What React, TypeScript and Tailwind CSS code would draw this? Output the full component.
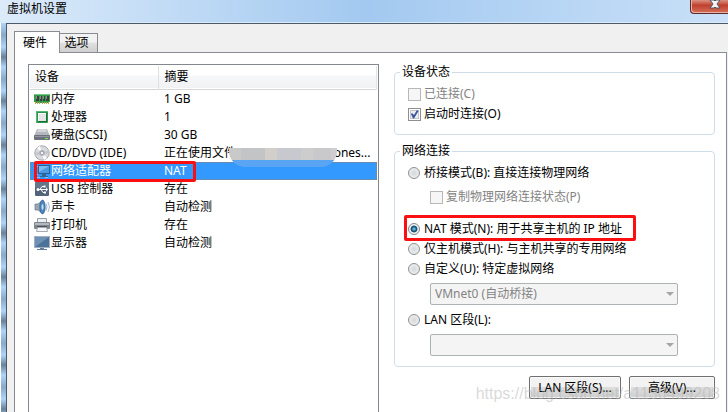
import { ReactNode } from "react";

const MemoryIcon = () => (
  <svg width="16" height="16" viewBox="0 0 16 16">
    <path d="M0 3h16v8h-1v1H1v-1H0z" fill="#2f9a48" />
    <path d="M0 3h16v1H0z" fill="#76c780" />
    <path d="M2 5h3v5H2zM6 5h2v5H6zM9 5h2v5H9zM12 5h3v5h-3z" fill="#3c3c40" />
    <path d="M2 5h1v3H2zM6 5h1v3H6zM9 5h1v3H9zM12 5h1v3h-1z" fill="#8b8b8f" />
    <path d="M1 11h1v2H1zM3 11h1v2H3zM5 11h1v2H5zM8 11h1v2H8zM10 11h1v2h-1zM12 11h1v2h-1zM14 11h1v2h-1z" fill="#b8a648" />
  </svg>
);
const CpuIcon = () => (
  <svg width="16" height="16" viewBox="0 0 16 16">
    <rect x="2" y="2" width="12" height="12" rx="1" fill="#2b9550" />
    <path d="M2 3l1-1h10v1H3v10H2z" fill="#56b875" />
    <rect x="4" y="4" width="8" height="8" fill="#e3e6e5" />
    <path d="M4 4h8v1H5v7H4z" fill="#fff" />
    <path d="M4 12.500h8.500V4" fill="none" stroke="#1b6f39" />
  </svg>
);
const DiskIcon = () => (
  <svg width="16" height="16" viewBox="0 0 16 16">
    <path d="M3 2h10l3 7H0z" fill="#b4b8be" />
    <path d="M4 2h8l1 3H3z" fill="#d2d5d9" />
    <rect y="8" width="16" height="5" rx="1" fill="#6d727a" />
    <path d="M1 9h14v1H1z" fill="#92979f" />
    <path d="M11 11h3v1h-3z" fill="#78e65b" />
  </svg>
);
const DiscIcon = () => (
  <svg width="16" height="16" viewBox="0 0 16 16">
    <circle cx="8" cy="8" r="7.2" fill="#d8dade" stroke="#a4a8af" />
    <path d="M8 8L3 3l3-2zM8 8l5 5-3 2z" fill="#fff" />
    <path d="M8 8L1 7v4zM8 8l7 1V5z" fill="#c3c6cd" />
    <circle cx="8" cy="8" r="3" fill="#b4b7bf" />
    <circle cx="8" cy="8" r="1.6" fill="#fff" stroke="#858994" strokeWidth=".6" />
  </svg>
);
const NetworkIcon = () => (
  <svg width="16" height="16" viewBox="0 0 16 16">
    <path d="M4 3.500H1.500v8H4M2.500 12v2.500H6M11 14.500h3" fill="none" stroke="#8fc0ea" />
    <rect x="4.500" y="2.500" width="11" height="8" fill="#4c9be0" stroke="#2b5f92" />
    <path d="M5 3h10L5 9z" fill="#7bbcf0" />
    <path d="M8 11h4v2h2v1H6v-1h2z" fill="#35668f" />
  </svg>
);
const UsbIcon = () => (
  <svg width="16" height="16" viewBox="0 0 16 16">
    <rect x="1" y="1" width="14" height="14" rx="1" fill="#526479" />
    <path d="M1 2l1-1h12l1 1v5H1z" fill="#64768a" />
    <path d="M4 8.500h8M6 8.500l2-3h2M7 8.500l2 3h2" fill="none" stroke="#fff" />
    <circle cx="4" cy="8.500" r="1.500" fill="#fff" />
    <path d="M12 6.500l2 2-2 2zM9.500 4.500h2v2h-2zM10 10.500h2v2h-2z" fill="#fff" />
  </svg>
);
const SoundIcon = () => (
  <svg width="16" height="16" viewBox="0 0 16 16">
    <path d="M1 5h3l5-4v14l-5-4H1z" fill="#9aa6b1" stroke="#687786" strokeWidth=".7" />
    <ellipse cx="8.500" cy="8" rx="2.700" ry="6.800" fill="#4b86c0" stroke="#2f5b8d" strokeWidth=".7" />
    <ellipse cx="8.500" cy="8" rx="1" ry="3" fill="#c5e3f7" />
    <path d="M12 4.500q2 3.500 0 7M14 3q3 5 0 10" fill="none" stroke="#9db9d6" />
  </svg>
);
const PrinterIcon = () => (
  <svg width="16" height="16" viewBox="0 0 16 16">
    <path d="M3.500 1.500h9v5h-9z" fill="#eef1f4" stroke="#959da6" />
    <rect y="5" width="16" height="7" rx="1" fill="#80878f" />
    <path d="M1 6h14v2H1z" fill="#b4b9bf" />
    <path d="M3 9h10v2H3z" fill="#4e5359" />
    <path d="M3.500 10.500h9l1 4h-11z" fill="#f6f7f8" stroke="#a6abb2" />
  </svg>
);
const DisplayIcon = () => (
  <svg width="16" height="16" viewBox="0 0 16 16">
    <rect x=".5" y="1.500" width="15" height="11" fill="#4d7298" stroke="#a0b0c0" />
    <path d="M1 2h14L1 12z" fill="#6d91b5" />
    <path d="M6 13h4v1h3v1H3v-1h3z" fill="#607e9e" />
  </svg>
);

const devices: { icon: ReactNode; name: string; summary: string; selected?: boolean; masked?: boolean }[] = [
  { icon: <MemoryIcon />, name: "内存", summary: "1 GB" },
  { icon: <CpuIcon />, name: "处理器", summary: "1" },
  { icon: <DiskIcon />, name: "硬盘(SCSI)", summary: "30 GB" },
  { icon: <DiscIcon />, name: "CD/DVD (IDE)", summary: "正在使用文件", masked: true },
  { icon: <NetworkIcon />, name: "网络适配器", summary: "NAT", selected: true },
  { icon: <UsbIcon />, name: "USB 控制器", summary: "存在" },
  { icon: <SoundIcon />, name: "声卡", summary: "自动检测" },
  { icon: <PrinterIcon />, name: "打印机", summary: "存在" },
  { icon: <DisplayIcon />, name: "显示器", summary: "自动检测" },
];

function DeviceTable() {
  return (
    <div className="w-[351px] shrink-0 border border-b-0 border-[#828790] p-px">
      <table className="w-full table-fixed border-collapse">
        <thead>
          <tr className="h-[23px] border-b border-[#d5d5d5] bg-linear-to-b from-white from-40% via-[#f7f8fa] via-45% to-[#f1f2f4] text-left">
            <th className="w-32 border-r border-[#dfdfdf] p-0 pl-[5px] font-normal">设备</th>
            <th className="border-r border-[#e5e5e5] p-0 pl-1.5 font-normal">摘要</th>
          </tr>
          <tr className="h-px"><td colSpan={2} className="p-0" /></tr>
        </thead>
        <tbody>
          {devices.map((d) => (
            <tr
              key={d.name}
              className={d.selected ? "h-[18px] bg-[#3399ff] text-white outline-1 -outline-offset-1 outline-dotted outline-[#c87830]/70" : "h-[18px]"}
            >
              <td className="relative p-0">
                <div className="flex items-center gap-px pl-1">
                  {d.icon}
                  <span>{d.name}</span>
                </div>
                {d.selected && <div className="absolute -top-px left-1 z-10 h-[21px] w-[162px] rounded-xs border-3 border-[#fa1010]" />}
              </td>
              <td className="relative p-0 pl-1.5">
                {d.masked ? (
                  <div className="flex justify-between pr-1.5">
                    <span>{d.summary}</span>
                    <span>ones...</span>
                    <div className="absolute top-1 left-[71px] z-10 h-[19px] w-[108px] overflow-hidden rounded-b-2xl">
                      <div className="flex h-3">
                        <div className="w-3 bg-[#c9c9c9]" />
                        <div className="w-6 bg-[#c3c4c6]" />
                        <div className="w-3 bg-[#d2cec9]" />
                        <div className="w-6 bg-[#c8c8cf]" />
                        <div className="w-3 bg-[#cecdce]" />
                        <div className="w-[18px] bg-[#c9c9cb]" />
                        <div className="grow bg-[#cfcdce]" />
                      </div>
                      <div className="h-[7px] bg-[#5aa4f4]" />
                    </div>
                  </div>
                ) : (
                  d.summary
                )}
              </td>
            </tr>
          ))}
        </tbody>
      </table>
    </div>
  );
}

const checkBase = "size-[13px] shrink-0 appearance-none border border-[#8e8f8f] bg-[#eceef0] shadow-[inset_0_0_0_1px_#fff,inset_0_0_0_2px_#c4c8cd] disabled:border-[#b8b8b8] disabled:bg-[#f6f6f6] disabled:shadow-none";

function Check({ label, checked, disabled }: { label: string; checked?: boolean; disabled?: boolean }) {
  return (
    <label className={disabled ? "flex h-5 items-center gap-[3px] text-[#838383]" : "flex h-5 items-center gap-[3px]"}>
      <span className="relative flex">
        <input type="checkbox" defaultChecked={checked} disabled={disabled} className={checkBase} />
        {checked && (
          <svg className="pointer-events-none absolute inset-0" width="13" height="13" viewBox="0 0 13 13">
            <path d="M3 6l1-1 2 2 3-5 1.500 1L6 10.500H5z" fill="#3d559e" />
          </svg>
        )}
      </span>
      {label}
    </label>
  );
}

function Radio({ label, checked }: { label: string; checked?: boolean }) {
  return (
    <label className="flex h-5 items-center gap-1">
      <input
        type="radio"
        name="network"
        defaultChecked={checked}
        className="size-3 shrink-0 appearance-none rounded-full border border-[#8e8f8f] bg-radial from-[#d4d7da] to-[#f6f6f6] checked:border-[#7d8790] checked:from-[#63cdf2] checked:from-5% checked:via-[#12435f] checked:via-40% checked:to-[#f0f4f6] checked:to-55%"
      />
      {label}
    </label>
  );
}

function Select({ label, value }: { label: string; value: string }) {
  return (
    <div className="relative ml-[22px] w-[248px]">
      <select aria-label={label} disabled className="block h-[22px] w-full appearance-none rounded-xs border border-[#adb2b5] bg-[#f4f4f4] pl-1 text-[#838383] opacity-100">
        <option>{value}</option>
      </select>
      <svg className="pointer-events-none absolute top-[9px] right-1" width="8" height="5" viewBox="0 0 8 5">
        <path d="M0 0h8L4 4z" fill="#a5a5a5" />
      </svg>
    </div>
  );
}

function Group({ title, children }: { title: string; children: ReactNode }) {
  return (
    <fieldset className="rounded-sm border border-[#d0dde8] pt-1 pb-2.5 pl-[13px]">
      <legend className="-ml-2 h-4 px-0.5 leading-4">{title}</legend>
      {children}
    </fieldset>
  );
}

const buttonClass = "h-[23px] rounded-xs border border-[#707070] bg-linear-to-b from-[#f2f2f2] from-45% via-[#dddddd] via-50% to-[#cfcfcf] shadow-[inset_0_0_0_1px_#fafafa]";

export default function App() {
  return (
    <div className="relative flex h-screen flex-col overflow-hidden bg-linear-to-b from-[#a8cff5] to-[#a3c8ef] font-['Noto_Sans','Noto_Sans_CJK_SC',sans-serif] text-xs leading-4 text-black">
      <header className="flex h-[23px] shrink-0 items-start justify-between border-b border-[#dcebfa] bg-linear-to-r from-[#dcebfa] via-[#a3c9f0] via-50% to-[#c9e0f8] pl-[7px]">
        <h1 className="pt-px">虚拟机设置</h1>
        <button aria-label="关闭" className="flex h-3.5 w-[38px] justify-center rounded-bl-sm border border-t-0 border-r-0 border-[#5b2a2a] bg-linear-to-b from-[#d99182] via-[#bf3f2d] via-40% to-[#d5705a] shadow-[inset_1px_-1px_0_#eab5a8]">
          <svg className="ml-2.5" width="12" height="9" viewBox="0 0 12 9">
            <path d="M1 0h4l1 1 1-1h4L8 4l3 4H7L6 7 5 8H1l3-4z" fill="#f5f5f5" stroke="#53535f" />
          </svg>
        </button>
      </header>
      <div className="flex grow">
        <div className="w-1.5 shrink-0 border-l border-white bg-[repeating-linear-gradient(180deg,#b0d4fa_0,#8ba9c8_12px,#b0d4fa_24px,#6a8298_34px,#b0d4fa_44px)]" />
        <main className="flex grow flex-col border-t border-l border-[#4b5a69] bg-[#f0f0f0] pt-[7px] pl-[7px]">
          <div role="tablist" className="flex items-end">
            <button role="tab" aria-selected="true" className="relative z-10 -mb-px h-[22px] w-[46px] border border-b-0 border-[#898c95] bg-white pr-1">硬件</button>
            <button role="tab" aria-selected="false" className="h-[19px] w-[38px] border border-b-0 border-l-0 border-[#898c95] bg-linear-to-b from-[#f2f2f2] from-45% via-[#e0e0e0] via-50% to-[#d0d0d0] pr-1">选项</button>
          </div>
          <section className="mr-px flex grow gap-[15px] border border-b-0 border-[#898c95] bg-white pt-[11px] pr-[11px] pl-[13px]">
            <DeviceTable />
            <div className="flex grow flex-col">
              <Group title="设备状态">
                <Check label="已连接(C)" disabled />
                <Check label="启动时连接(O)" checked />
              </Group>
              <div className="mt-2">
                <Group title="网络连接">
                  <Radio label="桥接模式(B): 直接连接物理网络" />
                  <div className="mt-1 ml-[22px]">
                    <Check label="复制物理网络连接状态(P)" disabled />
                  </div>
                  <div className="relative mt-3">
                    <Radio label="NAT 模式(N): 用于共享主机的 IP 地址" checked />
                    <div className="pointer-events-none absolute -top-1 -left-1 h-[26px] w-[232px] rounded-xs border-3 border-[#fa1010]" />
                  </div>
                  <Radio label="仅主机模式(H): 与主机共享的专用网络" />
                  <Radio label="自定义(U): 特定虚拟网络" />
                  <div className="mt-1 mb-[5px]">
                    <Select label="虚拟网络" value="VMnet0 (自动桥接)" />
                  </div>
                  <Radio label="LAN 区段(L):" />
                  <div className="mt-1">
                    <Select label="LAN 区段" value="" />
                  </div>
                </Group>
              </div>
              <div className="mt-[9px] flex justify-end gap-2">
                <button className={buttonClass + " w-[92px]"}>LAN 区段(S)...</button>
                <button className={buttonClass + " w-[86px]"}>高级(V)...</button>
              </div>
            </div>
          </section>
        </main>
      </div>
      <div className="pointer-events-none absolute right-2 bottom-2 font-['Liberation_Sans',sans-serif] text-base leading-5 text-[#b4b4b4]/50">https://blog.csdn.net/a1130499208</div>
    </div>
  );
}
